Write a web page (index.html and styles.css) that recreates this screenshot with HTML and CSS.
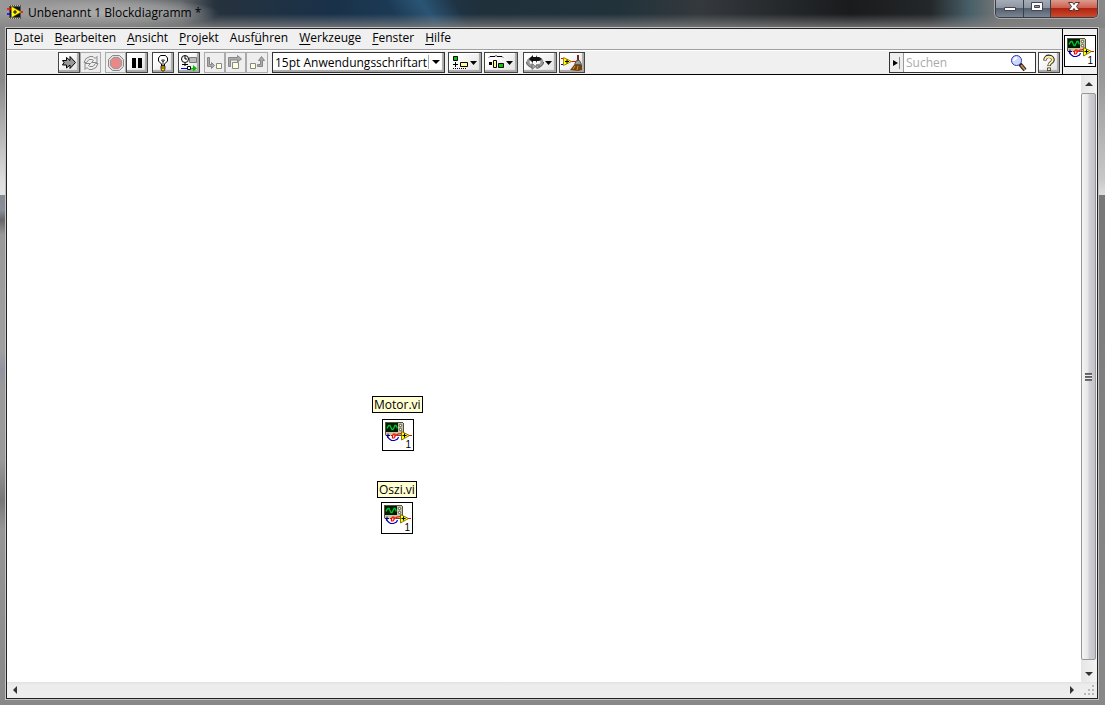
FILE: index.html
```html
<!DOCTYPE html>
<html lang="de">
<head>
<meta charset="utf-8">
<title>Unbenannt 1 Blockdiagramm *</title>
<link rel="stylesheet" href="styles.css">
</head>
<body>
<svg class="defs" aria-hidden="true">
  <symbol id="vi" viewBox="0 0 30 30">
    <path fill="#cbc7a0" d="M2 2h18v14H2z"/>
    <path fill="#55523a" d="M2 2h18v1H2zM2 3h1v12H2zM20 3h1v11h-1zM14 15h7v1h-7z"/>
    <path fill="#001c00" d="M3 3h12v9H3z"/>
    <path fill="none" stroke="#00c830" stroke-width="1.300" d="M4 8.500l1-2 1-1h1l1 2 1 2h1l1-2 1-2h1l1 2v1"/>
    <circle cx="17.500" cy="5.500" r="1.200" fill="#fff" stroke="#333" stroke-width=".8"/>
    <circle cx="17.500" cy="9.500" r="1.200" fill="#fff" stroke="#333" stroke-width=".8"/>
    <path fill="#000080" d="M3 15h4v1H3zM4.500 13.500h1v4h-1z"/>
    <path fill="none" stroke="#0000b0" stroke-width="1.200" d="M4.500 16v1l2 2 2 1.500h3l3-1.500 1-2"/>
    <path fill="none" stroke="#f00" stroke-width="1.200" d="M8 15.500h1.500l1-1.500h1.500v2.500l-1 1.500h-1.500v-2M12 16l3-2 4-.500M26 15.500h3"/>
    <path fill="#ff0" stroke="#665500" stroke-width=".8" d="M18.500 11.500l8 4-8 4.500z"/>
    <path fill="#000" d="M19.500 15h4v1h-4zM21 13.500h1v4h-1z"/>
  </symbol>
</svg>

<header class="titlebar">
  <svg class="app-icon" viewBox="0 0 16 16"><path fill="#555" d="M2 1h12v14H2z"/><path stroke="#bbb" stroke-dasharray="1 1" d="M2 1.500h12M2 14.500h12"/><path fill="#111" d="M3 3h10v10H3z"/><path stroke="#f00" stroke-width="1.500" d="M0 5h5M11 8h5"/><path stroke="#00f" stroke-width="1.500" d="M0 10h5"/><path fill="#ff0" stroke="#a80" stroke-width=".5" d="M4.500 2.500L14 8l-9.500 5.500z"/><path fill="#000" d="M6 7.500h4v1H6zM7.500 6h1v4h-1z"/></svg>
  <h1 class="title">Unbenannt 1 Blockdiagramm *</h1>
  <div class="captions">
    <button class="cap cap-min" aria-label="Minimieren"><svg width="14" height="14"><path fill="#fff" stroke="#445" d="M1.500 7.500h11v3h-11z"/></svg></button>
    <button class="cap cap-max" aria-label="Maximieren"><svg width="14" height="14"><path fill="#fff" stroke="#445" fill-rule="evenodd" d="M1.500 2.500h11v8h-11zM4.500 5.500h5v2h-5z"/></svg></button>
    <button class="cap cap-close" aria-label="Schließen"><svg width="14" height="14"><path fill="#fff" stroke="#533" d="M1.500 2.500h4l1.500 2 1.500-2h4l-3 4 3 4h-4l-1.500-2-1.500 2h-4l3-4z"/></svg></button>
  </div>
</header>

<main class="window">
  <div class="head">
    <div class="bars">
      <nav class="menu">
        <button><u>D</u>atei</button><button><u>B</u>earbeiten</button><button><u>A</u>nsicht</button><button><u>P</u>rojekt</button><button>Ausf<u>ü</u>hren</button><button><u>W</u>erkzeuge</button><button><u>F</u>enster</button><button><u>H</u>ilfe</button>
      </nav>
      <div class="toolbar">
        <div class="group">
          <button class="tool" aria-label="Ausführen"><svg width="18" height="18"><path fill="#999" stroke="#000" d="M2.500 6.500h4v-3l3.500 3V2.500l5.500 6-5.500 6v-3.500l-3.500 3v-3h-4l1.500-2.500z"/></svg></button>
          <button class="tool off" aria-label="Wiederholt ausführen"><svg width="18" height="18"><path fill="#eee" stroke="#888" d="M4.500 8.500H2l2-4 4-2h3l2 2 2-2v6H9.500l2-2-1.500-1-3 0zM13.500 9.500H16l-2 4-4 2H7l-2-2-2 2v-6h5.500l-2 2 1.500 1h3z"/></svg></button>
        </div>
        <div class="group">
          <button class="tool off" aria-label="Abbrechen"><svg width="18" height="18"><path fill="#ddd" stroke="#888" d="M5.500 1.500h7l4 4v7l-4 4h-7l-4-4v-7z"/><path fill="#e98888" stroke="#999" d="M6.500 3.500h5l3 3v5l-3 3h-5l-3-3v-5z"/></svg></button>
          <button class="tool" aria-label="Pause"><svg width="18" height="18"><path d="M4 4h4v10H4zM10 4h4v10h-4z"/></svg></button>
        </div>
        <button class="tool" aria-label="Highlight-Funktion"><svg width="18" height="18"><path fill="#fff" stroke="#000" d="M7.500 12v-2l-3-3V4l2-2.500h5l2 2.500v3l-3 3v2z"/><path fill="none" stroke="#000" stroke-width=".8" d="M9 12V8L7.500 6h3L9 8"/><path fill="#fc0" stroke="#000" stroke-width=".7" d="M7 12h4v3l-1 2H8l-1-2z"/><path stroke="#630" d="M7 14h4"/></svg></button>
        <button class="tool" aria-label="Werte beibehalten"><svg width="18" height="18"><circle cx="5" cy="5" r="3.500" fill="#fff" stroke="#000"/><path fill="none" stroke="#000" d="M5 2v3h2M5 9v3M2 10.500h6"/><path fill="#bbb" stroke="#777" d="M9.500 3.500h7v5h-7z"/><path stroke="#00f" d="M1 14.500h6"/><path fill="#fff" stroke="#000" d="M7.500 12.500h3v3h-3z"/><path fill="#0b0" d="M11 14h2v-3l4 3.500-4 3v-2h-2z"/></svg></button>
        <div class="group">
          <button class="tool off" aria-label="Hineinspringen"><svg width="18" height="18"><path fill="#aaa" stroke="#888" d="M1.500 3.500h2v7h2v-2l3 3-3 3v-2h-4z"/><path fill="#ffd" stroke="#888" d="M10.500 9.500h5v5h-5z"/></svg></button>
          <button class="tool off" aria-label="Überspringen"><svg width="18" height="18"><path fill="#aaa" stroke="#888" d="M1.500 12.500v-9h9v-2l4 3.500-4 3v-2h-7v6.500z"/><path fill="#ffd" stroke="#888" d="M5.500 8.500h6v6h-6z"/></svg></button>
          <button class="tool off" aria-label="Beenden"><svg width="18" height="18"><path fill="#ffd" stroke="#888" d="M2.500 9.500h5v5h-5z"/><path fill="#aaa" stroke="#888" d="M9.500 12.500h5v-6h2l-3-4-3 4h2v4h-3z"/></svg></button>
        </div>
        <div class="font-box">
          <select class="font-select" aria-label="Schriftart"><option>15pt Anwendungsschriftart</option></select>
          <svg class="font-arrow" width="16" height="16"><path stroke="#aaa" d="M.5 1v14"/><path d="M4 6h8l-4 4z"/></svg>
        </div>
        <button class="tool wide first" aria-label="Objekte ausrichten"><svg width="30" height="18"><path fill="#0c0" stroke="#000" d="M3.500 2.500h4v4h-4z"/><path fill="none" stroke="#000" d="M5.500 8v5M3 10.500h5"/><path stroke="#000" stroke-dasharray="1 1" d="M3 14.500h14"/><path fill="#ff8" stroke="#000" d="M10.500 8.500h7v4h-7z"/><path d="M20 7h7l-3.500 4z"/></svg></button>
        <button class="tool wide" aria-label="Objekte einteilen"><svg width="30" height="18"><path fill="none" stroke="#000" d="M3 3.500l1-1h5l1-1 1 1h5l1 1"/><path d="M3 8h3v3H3z"/><path fill="#ff8" stroke="#000" d="M7.500 6.500h3v7h-3z"/><path fill="#0c0" stroke="#000" d="M12.500 9.500h5v4h-5z"/><path d="M20 7h7l-3.500 4z"/></svg></button>
        <button class="tool wide reorder" aria-label="Neu ordnen"><svg width="30" height="18"><path fill="none" stroke="#999" stroke-width="3" d="M9 12c-4 0-6-2-6-4s2-3 4-3.500M11 12c4 0 6-2 6-4s-2-3-4-3.500"/><path fill="none" stroke="#333" stroke-width=".8" d="M8 14c-4-1-6.500-3-6.500-6M12 14c4-1 6.500-3 6.500-6"/><path fill="#111" d="M4 5l4-4v2h3V1l1 2h2l3 2-3 2h-2l-1 2V7l-3 0v2z"/><path fill="#aaa" stroke="#555" stroke-width=".7" d="M7 9.500v6l3.500-3zM11 11h3v3h-3z"/><path d="M20 7h7l-3.500 4z"/></svg></button>
        <button class="tool broom" aria-label="Diagramm aufräumen"><svg width="22" height="18"><path stroke="#f00" d="M0 4.500h4M9 7.500h6"/><path stroke="#00f" d="M0 10.500h4"/><path fill="#ff0" stroke="#a80" d="M2.500 3.500l8 4-8 4z"/><path stroke="#000" d="M4 7.500h4M6 5.500v4"/><path stroke="#6b2d08" stroke-width="2" d="M17 1v6"/><path fill="#999" stroke="#555" d="M15.500 6.500h3l2 4h-7z"/><path fill="#74400e" d="M13 11h8v5l-4 1-8-1z"/><path stroke="#d69a31" d="M14 12l-2 3M17 12l-1 4"/></svg></button>
        <div class="search">
          <button class="search-toggle" aria-label="Suchoptionen"><svg width="12" height="16"><path d="M3 5l5 3-5 3z"/><path stroke="#888" d="M9.500 2v12"/></svg></button>
          <input class="search-input" type="text" placeholder="Suchen" aria-label="Suchen">
          <svg class="lens" width="18" height="18"><path stroke="#222" stroke-width="4" d="M10 10l5 6"/><path stroke="#d08858" stroke-width="2" d="M11 11l4 5"/><circle cx="6.500" cy="6.500" r="5" fill="#ccd8ff" stroke="#3038a8"/><path fill="none" stroke="#fff" stroke-width="2" d="M4 7c0-2 1-3 3-3"/></svg>
        </div>
        <button class="tool help" aria-label="Hilfe"><svg width="18" height="18"><path fill="none" stroke="#222" stroke-width="3.500" d="M5 6.500c0-6 8-5 8-.500 0 2.500-4 2.500-4 6M9 13.500v3.500"/><path fill="none" stroke="#fff0a0" stroke-width="2" d="M5.200 6c0-4.500 7.500-4.500 7.500 0 0 2.500-3.700 2.500-3.700 5.500M9 14.200v2"/></svg></button>
      </div>
    </div>
    <div class="pane"><div class="vi"><svg class="vi-art"><use href="#vi"/></svg><span class="vi-num">1</span></div></div>
  </div>

  <div class="work">
    <section class="canvas" aria-label="Blockdiagramm">
      <span class="label motor-label">Motor.vi</span>
      <div class="vi motor-icon"><svg class="vi-art"><use href="#vi"/></svg><span class="vi-num">1</span></div>
      <span class="label oszi-label">Oszi.vi</span>
      <div class="vi oszi-icon"><svg class="vi-art"><use href="#vi"/></svg><span class="vi-num">1</span></div>
    </section>
    <div class="vscroll">
      <button class="arrow" aria-label="Nach oben"><svg width="8" height="6"><path fill="#333" d="M0 5l4-4 4 4z"/></svg></button>
      <div class="thumb"><i class="grip"></i></div>
      <button class="arrow down" aria-label="Nach unten"><svg width="8" height="6"><path fill="#333" d="M0 1l4 4 4-4z"/></svg></button>
    </div>
  </div>
  <div class="hscroll">
    <button class="arrow" aria-label="Nach links"><svg width="6" height="8"><path fill="#333" d="M5 0L1 4l4 4z"/></svg></button>
    <button class="arrow" aria-label="Nach rechts"><svg width="6" height="8"><path fill="#333" d="M1 0l4 4-4 4z"/></svg></button>
    <svg class="sizer" width="16" height="15"><path fill="#b8b8b8" d="M11 3h2v2h-2zM7 7h2v2H7zM11 7h2v2h-2zM3 11h2v2H3zM7 11h2v2H7zM11 11h2v2h-2z"/></svg>
  </div>
</main>
</body>
</html>
```
FILE: styles.css
```css
* { box-sizing: border-box; }
body {
  margin: 0;
  height: 100vh;
  display: flex;
  flex-direction: column;
  overflow: hidden;
  font: 12px/16px "Open Sans", "Noto Sans", sans-serif;
  color: #000;
  background:
    linear-gradient(#888 0, #999 80px, #c8c8c8 180px, #ddd 195px, #777 195px, #808080 400px, #888 100%) right / 7px 100% no-repeat,
    linear-gradient(#888 0, #888 80px, #ddd 180px, #e4e4e4 195px, #858994 195px, #8a8e98 210px, #666 220px, #999 235px, #a0a0a0 350px, #9094a0 370px, #9a9a9a 390px, #999 460px, #777 500px, #969696 530px, #888 100%);
}
button, input, select { font: inherit; color: inherit; margin: 0; padding: 0; border: 0; background: none; border-radius: 0; }
svg { display: block; flex: none; }
.defs { position: absolute; width: 0; height: 0; }

.titlebar {
  flex: none;
  height: 28px;
  display: flex;
  padding: 0 7px 0 7px;
  background:
    linear-gradient(rgba(130,130,130,0) 50%, rgba(130,130,130,.8) 100%),
    radial-gradient(ellipse 110px 16px at 110px 13px, rgba(185,185,185,.8) 0, rgba(170,170,170,.6) 60%, transparent 100%),
    linear-gradient(55deg, transparent 36%, rgba(52,104,142,.6) 39%, transparent 42%),
    linear-gradient(90deg, #999 0, #858585 100px, #65696c 180px, #26323d 215px, #193149 330px, #1c3b56 400px, #20303b 480px, #22323b 620px, #34393d 700px, #191b1d 850px, #242729 930px, #486069 970px, #777 1000px, #888 100%);
}
.app-icon { width: 16px; height: 16px; margin-top: 4px; }
.title { margin: 5px 0 0 5px; font-size: 12px; line-height: 16px; font-weight: 400; white-space: nowrap; }
.captions { margin-left: auto; display: flex; height: 18px; border: 1px solid #383e48; border-top: 0; border-radius: 0 0 5px 5px; box-shadow: 0 0 0 1px #aaa; overflow: hidden; }
.cap { width: 28px; display: flex; justify-content: center; background: linear-gradient(#a6adb7, #8e96a2 45%, #555f6e 50%, #7b8694); border-right: 1px solid #383e48; }
.cap-max { width: 27px; }
.cap-close { width: 46px; border: 0; background: linear-gradient(#dc9a8e, #cc6250 45%, #ae2410 50%, #cc4a2c); }

.window { flex: 1; min-height: 0; margin: 0 7px 6px 6px; border: 1px solid #222; display: flex; flex-direction: column; box-shadow: 0 0 0 1px #c4c4c4; background: #f0f0f0; }
.head { display: flex; flex: none; border-bottom: 1px solid #000; }
.bars { flex: 1; min-width: 0; }
.menu { display: flex; gap: 11px; height: 21px; padding-left: 7px; border-bottom: 1px solid #a0a0a0; }
.menu button { height: 18px; line-height: 18px; white-space: nowrap; }
.menu u { text-underline-offset: 2px; }
.toolbar { display: flex; height: 24px; padding: 1px 2px 0 51px; border-top: 1px solid #fff; gap: 4px; }
.group { display: flex; }
.tool { flex: none; width: 22px; height: 21px; display: flex; align-items: center; justify-content: center; background: linear-gradient(135deg, #fff 20%, #e8e8e8 80%); border: 1px solid #444; box-shadow: inset -2px -2px 1px #a8a8a8, inset 1px 1px #fff; }
.tool.off { width: 21px; background: #eee; border-color: #aaa; box-shadow: none; }
.group .tool.off:nth-child(3) { width: 22px; }
.wide { width: 34px; margin-right: -2px; }
.wide.first { margin-left: -1px; }
.reorder { margin-left: 3px; }
.broom { width: 26px; }
.font-box { position: relative; width: 173px; height: 21px; }
.font-select { appearance: none; width: 100%; height: 100%; padding-left: 2px; line-height: 18px; border: 1px solid #333; background: #fff; box-shadow: inset -2px -2px 1px #a8a8a8; }
.font-arrow { position: absolute; right: 1px; top: 2px; }
.search { margin-left: auto; flex: none; width: 147px; height: 21px; display: flex; align-items: center; border: 1px solid #333; background: #fff; }
.search-toggle { width: 14px; height: 100%; display: flex; align-items: center; background: #eee; border-right: 1px solid #999; }
.search-input { flex: 1; min-width: 0; padding-left: 2px; outline: 0; }
.search-input::placeholder { color: #aaa; opacity: 1; }
.lens { margin-right: 7px; }
.help { margin-left: -2px; }
.pane { width: 35px; border-left: 1px solid #000; display: flex; align-items: center; justify-content: center; padding-bottom: 1px; }

.vi { position: relative; width: 32px; height: 32px; border: 1px solid #000; background: #fff; }
.vi-art { width: 30px; height: 30px; }
.vi-num { position: absolute; right: 2px; bottom: 0; font: 10px/11px "Liberation Sans", sans-serif; }

.work { flex: 1; min-height: 0; display: flex; }
.canvas { position: relative; flex: 1; background: #fff; }
.label { position: absolute; height: 17px; line-height: 15px; padding: 0 1px; border: 1px solid #000; background: #ffffd2; white-space: nowrap; }
.motor-label { left: 365px; top: 321px; }
.motor-icon { position: absolute; left: 375px; top: 344px; }
.oszi-label { left: 370px; top: 406px; }
.oszi-icon { position: absolute; left: 374px; top: 427px; }

.vscroll { width: 16px; display: flex; flex-direction: column; background: linear-gradient(90deg, #e6e6e6, #f3f3f3); }
.arrow { flex: none; width: 16px; height: 18px; display: flex; align-items: center; justify-content: center; }
.down { height: 22px; padding-top: 6px; }
.thumb { flex: 1; display: flex; align-items: center; justify-content: center; margin-right: 1px; border: 1px solid #979797; border-radius: 2px; background: linear-gradient(90deg, #f5f5f5, #e6e6e9 45%, #d0d0d6 55%, #c2c3c9); }
.grip { width: 7px; height: 8px; background: repeating-linear-gradient(#555 0, #777 2px, #eee 2px, #eee 3px); }
.hscroll { flex: none; height: 16px; display: flex; justify-content: space-between; background: linear-gradient(#e2e2e2, #ececec 3px, #eee); }
.hscroll .arrow { height: 15px; }
.hscroll .arrow:nth-child(2) { margin-left: auto; }
.sizer { margin-left: 1px; }
```
